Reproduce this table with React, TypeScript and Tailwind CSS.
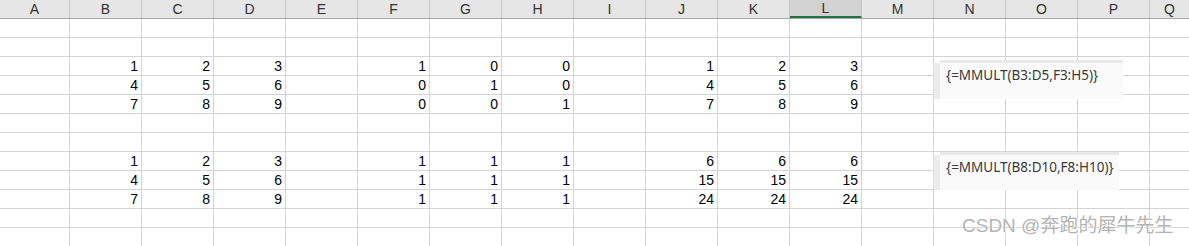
import React from 'react';

const columns = ['A', 'B', 'C', 'D', 'E', 'F', 'G', 'H', 'I', 'J', 'K', 'L', 'M', 'N', 'O', 'P', 'Q'];

// sheet contents keyed by row number, then by column letter
const cells: Record<number, Record<string, string>> = {
  3: { B: '1', C: '2', D: '3', F: '1', G: '0', H: '0', J: '1', K: '2', L: '3' },
  4: { B: '4', C: '5', D: '6', F: '0', G: '1', H: '0', J: '4', K: '5', L: '6' },
  5: { B: '7', C: '8', D: '9', F: '0', G: '0', H: '1', J: '7', K: '8', L: '9' },
  8: { B: '1', C: '2', D: '3', F: '1', G: '1', H: '1', J: '6', K: '6', L: '6' },
  9: { B: '4', C: '5', D: '6', F: '1', G: '1', H: '1', J: '15', K: '15', L: '15' },
  10: { B: '7', C: '8', D: '9', F: '1', G: '1', H: '1', J: '24', K: '24', L: '24' },
};

const rows = Array.from({ length: 12 }, (_, i) => i + 1);

const colWidth = (c: string) => (c === 'A' ? 'w-[70px]' : c === 'Q' ? 'w-[40px]' : 'w-[72px]');

function FormulaTip({ text, className }: { text: string; className: string }) {
  return (
    <div className={`absolute flex ${className}`}>
      <div className="w-[7px] bg-[#ececec] border-l border-[#e0e0e0] mt-[3px]" />
      <div className="flex-1 flex flex-col">
        <div className="h-[3px] bg-[#e9e9e9]" />
        <div className="flex-1 bg-[#fafafa] pl-[6px] pt-[3px] text-[13.5px] text-[#3a3a3a] font-['Noto_Sans',sans-serif] leading-[18px]">
          {text}
        </div>
      </div>
    </div>
  );
}

export default function App() {
  return (
    <div className="relative w-[1189px] h-[246px] overflow-hidden bg-white font-['Liberation_Sans',Arial,sans-serif]">
      {/* column header strip */}
      <div className="flex h-[19px] bg-[#e6e6e6] border-b border-[#a6a6a6]">
        {columns.map((c) => (
          <div
            key={c}
            className={`${colWidth(c)} shrink-0 h-[18px] flex items-center justify-center text-[14px] text-[#333] border-r border-[#c8c8c8] ${
              c === 'L' ? 'bg-[#d2d2d2] border-b-2 border-b-[#217346]' : ''
            }`}
          >
            {c}
          </div>
        ))}
      </div>

      {/* cell grid */}
      {rows.map((r) => (
        <div key={r} className="flex h-[19px] border-b border-[#d4d4d4]">
          {columns.map((c) => (
            <div
              key={c}
              className={`${colWidth(c)} shrink-0 h-[18px] border-r border-[#d4d4d4] flex items-center justify-end pr-[3px] text-[14px] text-black leading-none`}
            >
              {cells[r]?.[c] ?? ''}
            </div>
          ))}
        </div>
      ))}

      <FormulaTip text="{=MMULT(B3:D5,F3:H5)}" className="left-[933px] top-[60px] w-[190px] h-[39px]" />
      <FormulaTip text="{=MMULT(B8:D10,F8:H10)}" className="left-[933px] top-[152px] w-[186px] h-[38px]" />

      <div className="absolute left-[962px] top-[212px] text-[19px] text-[#b4b4b4] font-['Liberation_Sans','Noto_Sans_CJK_SC',sans-serif] [text-shadow:0_0_1px_#fff,1px_1px_0_#fff]">
        CSDN @奔跑的犀牛先生
      </div>
    </div>
  );
}
